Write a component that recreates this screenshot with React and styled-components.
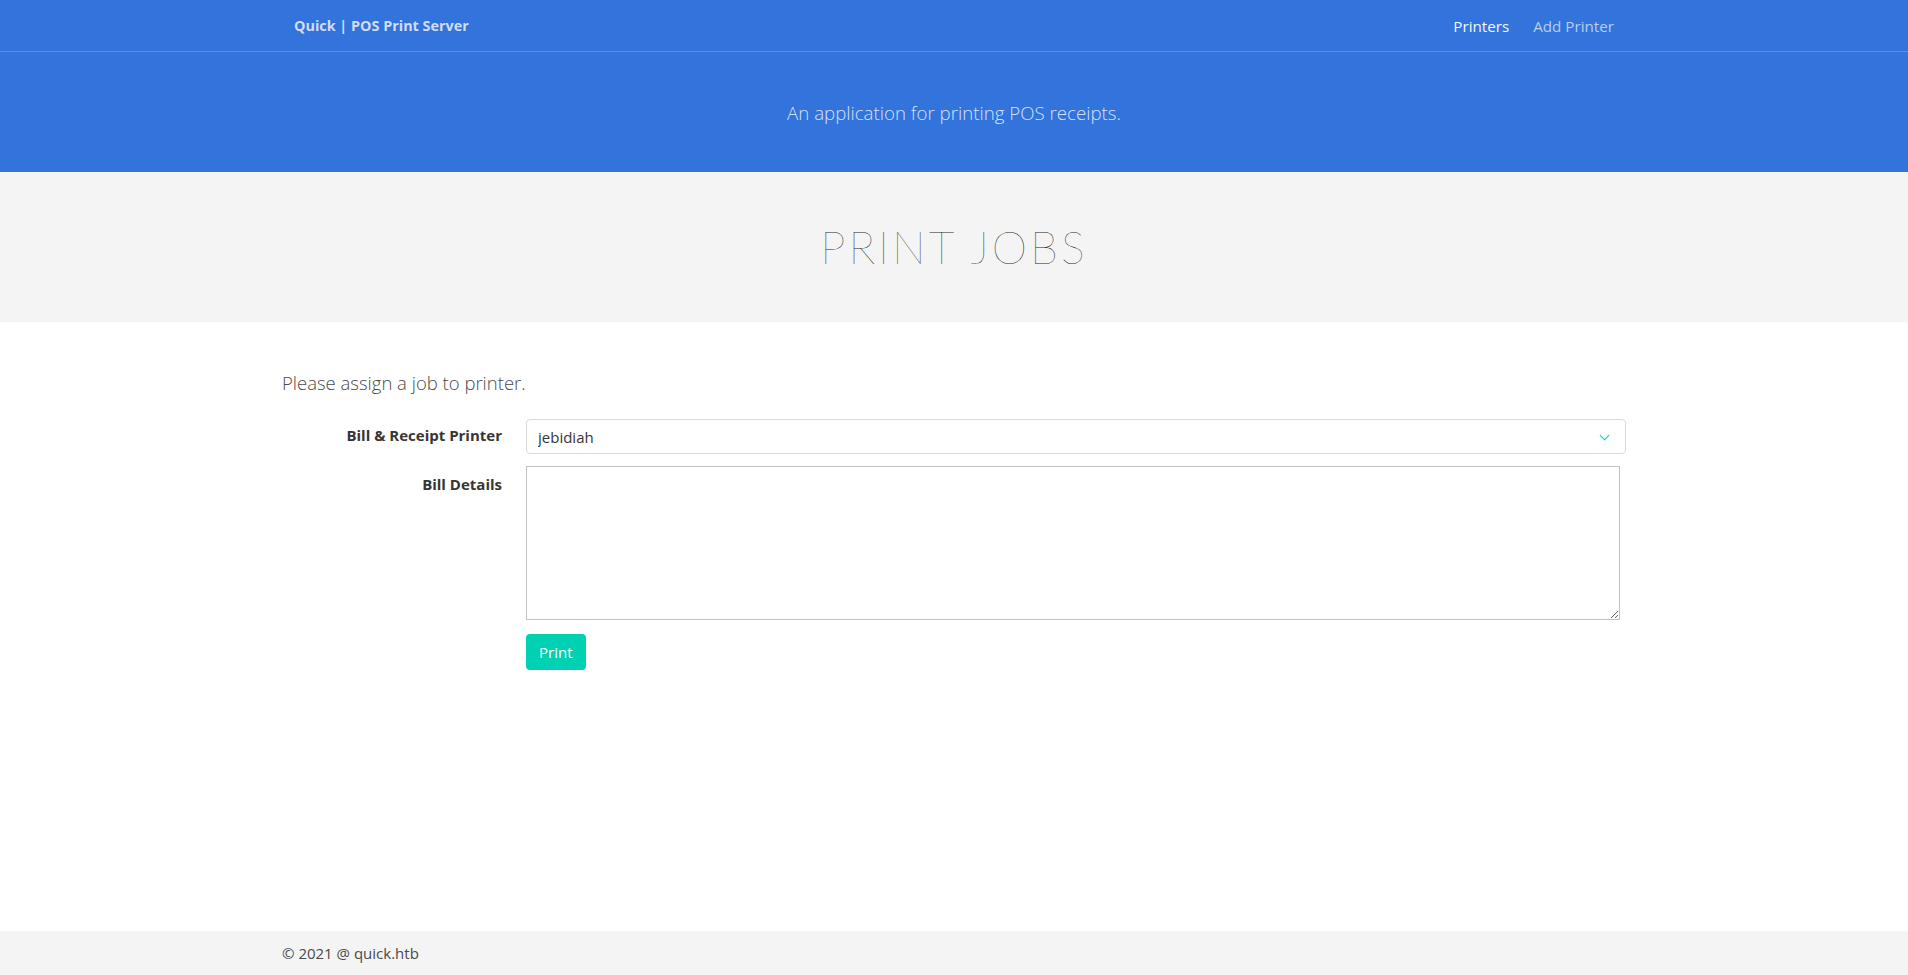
import React from 'react'
import styled, { createGlobalStyle } from 'styled-components'

const GlobalStyle = createGlobalStyle`
  html, body {
    margin: 0;
    padding: 0;
    background: #ffffff;
    font-family: "Open Sans", "Noto Sans", Lato, sans-serif;
    color: #4a4a4a;
    font-size: 16px;
  }
  * { box-sizing: border-box; }
`

const Page = styled.div`
  min-height: 100vh;
  display: flex;
  flex-direction: column;
`

const Container = styled.div`
  width: 1344px;
  margin: 0 auto;
`

const Hero = styled.section`
  background: #3273dc;
  color: #ffffff;
`

const NavBar = styled.nav`
  height: 52px;
  border-bottom: 1px solid #5a8fe4;
  ${Container} {
    height: 100%;
    display: flex;
    align-items: center;
    justify-content: space-between;
  }
`

const Brand = styled.a`
  padding: 0 12px;
  font-weight: 700;
  font-size: 14.4px;
  color: #d2ddf5;
  text-decoration: none;
`

const NavMenu = styled.div`
  display: flex;
`

const NavItem = styled.a`
  padding: 0 12px;
  font-size: 15.2px;
  color: ${p => (p.active ? '#f4f7fd' : '#b8cdf1')};
  text-decoration: none;
`

const HeroBody = styled.div`
  padding: 48px 24px 47px;
  text-align: center;
`

const Subtitle = styled.h2`
  margin: 0;
  font-size: 18.7px;
  font-weight: 300;
  line-height: 25px;
  color: #d6e1f7;
`

const TitleSection = styled.section`
  background: #f4f4f4;
  padding: 48px 24px;
  text-align: center;
`

const Title = styled.h1`
  margin: 0;
  font-family: Lato, "Open Sans", sans-serif;
  font-size: 45px;
  line-height: 54px;
  font-weight: 200;
  letter-spacing: 3px;
  color: #1f1f1f;
`

const Main = styled.section`
  flex: 1;
  padding: 48px 0;
`

const Lead = styled.p`
  margin: 0 0 24px;
  font-size: 18.5px;
  font-weight: 300;
  line-height: 25px;
  color: #4a4a4a;
`

const Field = styled.div`
  display: flex;
  margin-bottom: 12px;
`

const FieldLabel = styled.label`
  flex: 1 1 0;
  margin-right: 24px;
  text-align: right;
  padding-top: ${p => p.top || 6}px;
  font-weight: 700;
  font-size: 15px;
  color: #363636;
`

const FieldBody = styled.div`
  flex: 5 1 0;
  display: flex;
  flex-direction: column;
  align-items: flex-start;
`

const SelectWrap = styled.div`
  position: relative;
  width: 100%;
  &::after {
    content: '';
    position: absolute;
    right: 18px;
    top: 13px;
    width: 6px;
    height: 6px;
    border-left: 1px solid #00d1b2;
    border-bottom: 1px solid #00d1b2;
    transform: rotate(-45deg);
    pointer-events: none;
  }
`

const Select = styled.select`
  appearance: none;
  width: 100%;
  height: 35px;
  padding: 0 40px 0 11px;
  border: 1px solid #dbdbdb;
  border-radius: 4px;
  background: #ffffff;
  font-family: inherit;
  font-size: 15px;
  color: #363636;
`

const TextArea = styled.textarea`
  width: 1094px;
  height: 154px;
  border: 1px solid #c5c2bf;
  font-family: inherit;
  font-size: 15px;
  padding: 2px;
  resize: both;
`

const Button = styled.button`
  margin-top: 14px;
  height: 36px;
  padding: 0 13px;
  border: none;
  border-radius: 4px;
  background: #00d1b2;
  color: #ffffff;
  font-family: inherit;
  font-size: 15px;
  cursor: pointer;
`

const Footer = styled.footer`
  background: #f4f4f4;
  height: 44px;
  display: flex;
  align-items: center;
`

const FooterText = styled.p`
  margin: 0;
  font-size: 15px;
  color: #4a4a4a;
`

export default function App () {
  return (
    <Page>
      <GlobalStyle/>
      <Hero>
        <NavBar>
          <Container>
            <Brand href={'#'}>Quick | POS Print Server</Brand>
            <NavMenu>
              <NavItem href={'#'} active>Printers</NavItem>
              <NavItem href={'#'}>Add Printer</NavItem>
            </NavMenu>
          </Container>
        </NavBar>
        <HeroBody>
          <Subtitle>An application for printing POS receipts.</Subtitle>
        </HeroBody>
      </Hero>
      <TitleSection>
        <Title>PRINT JOBS</Title>
      </TitleSection>
      <Main>
        <Container>
          <Lead>Please assign a job to printer.</Lead>
          <Field>
            <FieldLabel>Bill &amp; Receipt Printer</FieldLabel>
            <FieldBody>
              <SelectWrap>
                <Select defaultValue={'jebidiah'}>
                  <option value={'jebidiah'}>jebidiah</option>
                </Select>
              </SelectWrap>
            </FieldBody>
          </Field>
          <Field>
            <FieldLabel top={8}>Bill Details</FieldLabel>
            <FieldBody>
              <TextArea/>
              <Button>Print</Button>
            </FieldBody>
          </Field>
        </Container>
      </Main>
      <Footer>
        <Container>
          <FooterText>© 2021 @ quick.htb</FooterText>
        </Container>
      </Footer>
    </Page>
  )
}
